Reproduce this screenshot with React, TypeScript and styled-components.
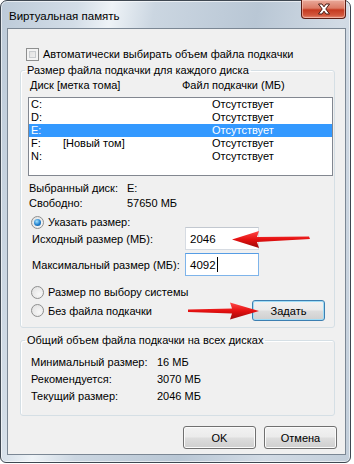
import React from "react";
import styled, { createGlobalStyle } from "styled-components";

const GlobalStyle = createGlobalStyle`
  body {
    margin: 0;
    background: #ffffff;
    font-family: "Liberation Sans", Arial, sans-serif;
    font-size: 11px;
    color: #000;
  }
`;

const Window = styled.div`
  position: relative;
  width: 351px;
  height: 463px;
  box-sizing: border-box;
  padding: 0 4px 7px 6px;
  display: flex;
  flex-direction: column;
  border: 1px solid #3f4852;
  border-radius: 7px 7px 6px 6px;
  background: linear-gradient(
    100deg,
    #bccad8 0%,
    #d3dde7 18%,
    #eef3f7 26%,
    #cbd6e1 36%,
    #b9c7d5 60%,
    #d2dbe5 80%,
    #c2ceda 100%
  );
  box-shadow: inset 0 0 0 1px rgba(255, 255, 255, 0.6);
`;

const TitleBar = styled.div`
  height: 27px;
  display: flex;
  align-items: flex-start;
  justify-content: space-between;
`;

const Title = styled.span`
  margin: 8px 0 0 2px;
  line-height: 14px;
  font-size: 11.5px;
  color: #000;
`;

const CloseButton = styled.div`
  width: 45px;
  height: 19px;
  margin-top: -1px;
  display: flex;
  align-items: center;
  justify-content: center;
  box-sizing: border-box;
  border: 1px solid #5b1d14;
  border-top: none;
  border-radius: 0 0 4px 4px;
  background: linear-gradient(
    180deg,
    #e9a99a 0%,
    #dc7c66 45%,
    #c53a20 55%,
    #d2583d 85%,
    #e6907a 100%
  );
  box-shadow: inset 0 0 0 1px rgba(255, 220, 210, 0.5);
`;

const Client = styled.div`
  flex: 1;
  display: flex;
  flex-direction: column;
  padding: 0 10px 0 12px;
  background: #f0f0f0;
  border: 1px solid #7b8794;
`;

const CheckRow = styled.label`
  display: flex;
  align-items: center;
  gap: 4px;
  margin: 19px 0 0 6px;
  height: 13px;
  line-height: 13px;
`;

const CheckBox = styled.span`
  width: 13px;
  height: 13px;
  box-sizing: border-box;
  border: 1px solid #8e8f8f;
  background: linear-gradient(135deg, #dcdcdc 0%, #f6f6f6 100%);
  box-shadow: inset 0 0 0 2px #f4f4f4, inset 0 0 0 3px #c9cccf;
`;

const Group = styled.fieldset<{ $bottom: number; $top: number }>`
  margin: ${(p) => p.$top}px 0 0 0;
  padding: 0 0 ${(p) => p.$bottom}px 0;
  border: 1px solid #d5dfe5;
  border-radius: 3px;
  box-shadow: inset 1px 1px 0 #fff;
  min-width: 0;
`;

const Legend = styled.legend`
  margin-left: 4px;
  padding: 0 2px;
  line-height: 14px;
`;

const ColumnHead = styled.div`
  display: grid;
  grid-template-columns: 152px 1fr;
  padding-left: 9px;
  margin-top: 1px;
  line-height: 14px;
`;

const ListBox = styled.div`
  margin: 5px 1px 0 7px;
  height: 79px;
  box-sizing: border-box;
  border: 1px solid #828790;
  background: #fff;
`;

const ListRow = styled.div<{ $selected?: boolean }>`
  display: grid;
  grid-template-columns: 32px 149px 1fr;
  height: 13px;
  line-height: 13px;
  padding-left: 2px;
  background: ${(p) => (p.$selected ? "#3399ff" : "transparent")};
  color: ${(p) => (p.$selected ? "#fff" : "#000")};
`;

const InfoRow = styled.div<{ $label: number; $line?: number; $pad?: number }>`
  display: grid;
  grid-template-columns: ${(p) => p.$label}px 1fr;
  line-height: ${(p) => p.$line ?? 15}px;
  padding-left: ${(p) => p.$pad ?? 8}px;
  white-space: nowrap;
`;

const InfoBlock = styled.div<{ $top: number }>`
  margin-top: ${(p) => p.$top}px;
`;

const RadioRow = styled.label<{ $top: number; $height?: number }>`
  display: flex;
  align-items: center;
  gap: 4px;
  padding-left: 10px;
  margin-top: ${(p) => p.$top}px;
  height: ${(p) => p.$height ?? 14}px;
`;

const RadioLabel = styled.span`
  display: flex;
  align-items: center;
  gap: 4px;
`;

const Radio = styled.span<{ $checked?: boolean }>`
  width: 13px;
  height: 13px;
  box-sizing: border-box;
  border-radius: 50%;
  border: 1px solid #8e8f8f;
  background: radial-gradient(circle at 65% 65%, #f8f8f8 0%, #dedede 100%);
  display: flex;
  align-items: center;
  justify-content: center;

  &::after {
    content: "";
    display: ${(p) => (p.$checked ? "block" : "none")};
    width: 7px;
    height: 7px;
    border-radius: 50%;
    background: radial-gradient(circle at 40% 35%, #a6e4ff 0%, #1f7fce 55%, #0f4f8a 100%);
  }
`;

const FieldRow = styled.div<{ $top: number }>`
  display: flex;
  align-items: center;
  margin-top: ${(p) => p.$top}px;
  padding-left: 11px;
`;

const FieldLabel = styled.span`
  width: 153px;
  white-space: nowrap;
`;

const TextBox = styled.div<{ $focused?: boolean }>`
  width: 74px;
  height: 23px;
  box-sizing: border-box;
  border: 1px solid ${(p) => (p.$focused ? "#7eb4ea" : "#d6dbe2")};
  border-top-color: ${(p) => (p.$focused ? "#569de5" : "#c2c8d0")};
  background: #fff;
  display: flex;
  align-items: center;
  padding-left: 4px;
  font-size: 11.5px;
`;

const Caret = styled.span`
  width: 1px;
  height: 15px;
  background: #000;
  margin-left: 1px;
`;

const Button = styled.button<{ $focused?: boolean; $h?: number }>`
  width: 73px;
  height: ${(p) => p.$h ?? 23}px;
  box-sizing: border-box;
  padding: 0;
  font-family: "Liberation Sans", Arial, sans-serif;
  font-size: 11px;
  color: #000;
  border-radius: 3px;
  border: 1px solid ${(p) => (p.$focused ? "#3c7fb1" : "#707070")};
  background: linear-gradient(
    180deg,
    #f2f2f2 0%,
    #ebebeb 48%,
    #dddddd 52%,
    #cfcfcf 100%
  );
  box-shadow: inset 0 0 0 1px ${(p) => (p.$focused ? "#9fdcf6" : "#fbfbfb")};
`;

const SplitRow = styled.div`
  display: flex;
  align-items: center;
  justify-content: space-between;
  margin-top: 1px;
  padding: 0 9px 0 10px;
  height: 21px;
`;

const Footer = styled.div`
  display: flex;
  justify-content: flex-end;
  gap: 8px;
  margin: 10px -2px 0 0;
`;

const Overlay = styled.svg`
  position: absolute;
  left: -1px;
  top: -1px;
  pointer-events: none;
`;

const drives = [
  { d: "C:", label: "", size: "Отсутствует" },
  { d: "D:", label: "", size: "Отсутствует" },
  { d: "E:", label: "", size: "Отсутствует", sel: true },
  { d: "F:", label: "[Новый том]", size: "Отсутствует" },
  { d: "N:", label: "", size: "Отсутствует" },
];

const totals = [
  ["Минимальный размер:", "16 МБ"],
  ["Рекомендуется:", "3070 МБ"],
  ["Текущий размер:", "2046 МБ"],
];

const App = () => {
  return (
    <>
      <GlobalStyle />
      <Window>
        <TitleBar>
          <Title>Виртуальная память</Title>
          <CloseButton>
            <svg width="14" height="12" viewBox="0 0 14 12">
              <path
                d="M1.5 1 H5 L7 3.8 L9 1 H12.5 L8.8 6 L12.5 11 H9 L7 8.2 L5 11 H1.5 L5.2 6 Z"
                fill="#fff"
                stroke="#4a1a12"
                strokeWidth="1"
                strokeLinejoin="round"
              />
            </svg>
          </CloseButton>
        </TitleBar>
        <Client>
          <CheckRow>
            <CheckBox />
            <span>Автоматически выбирать объем файла подкачки</span>
          </CheckRow>

          <Group $top={2} $bottom={6}>
            <Legend>Размер файла подкачки для каждого диска</Legend>
            <ColumnHead>
              <span>Диск [метка тома]</span>
              <span>Файл подкачки (МБ)</span>
            </ColumnHead>
            <ListBox>
              {drives.map((r) => (
                <ListRow key={r.d} $selected={r.sel}>
                  <span>{r.d}</span>
                  <span>{r.label}</span>
                  <span>{r.size}</span>
                </ListRow>
              ))}
            </ListBox>
            <InfoBlock $top={5}>
              <InfoRow $label={98}>
                <span>Выбранный диск:</span>
                <span>E:</span>
              </InfoRow>
              <InfoRow $label={98}>
                <span>Свободно:</span>
                <span>57650 МБ</span>
              </InfoRow>
            </InfoBlock>
            <RadioRow $top={5} $height={12}>
              <Radio $checked />
              <span>Указать размер:</span>
            </RadioRow>
            <FieldRow $top={-1}>
              <FieldLabel>Исходный размер (МБ):</FieldLabel>
              <TextBox>2046</TextBox>
            </FieldRow>
            <FieldRow $top={3}>
              <FieldLabel>Максимальный размер (МБ):</FieldLabel>
              <TextBox $focused>
                4092
                <Caret />
              </TextBox>
            </FieldRow>
            <RadioRow $top={9}>
              <Radio />
              <span>Размер по выбору системы</span>
            </RadioRow>
            <SplitRow>
              <RadioLabel>
                <Radio />
                <span>Без файла подкачки</span>
              </RadioLabel>
              <Button $focused $h={21}>
                Задать
              </Button>
            </SplitRow>
          </Group>

          <Group $top={5} $bottom={10}>
            <Legend>Общий объем файла подкачки на всех дисках</Legend>
            <InfoBlock $top={7}>
              {totals.map(([k, v]) => (
                <InfoRow key={k} $label={126} $line={17} $pad={10}>
                  <span>{k}</span>
                  <span>{v}</span>
                </InfoRow>
              ))}
            </InfoBlock>
          </Group>

          <Footer>
            <Button>OK</Button>
            <Button>Отмена</Button>
          </Footer>
        </Client>

        <Overlay width="354" height="464" viewBox="0 0 354 464">
          <defs>
            <linearGradient id="arr" x1="0" y1="0" x2="0" y2="1">
              <stop offset="0" stopColor="#ff4a4a" />
              <stop offset="0.5" stopColor="#e41010" />
              <stop offset="1" stopColor="#9c0a0a" />
            </linearGradient>
          </defs>
          <path
            d="M232 239.5 L259 231 L257 237 L309 236.5 L310 239 L257 242 L259 248 Z"
            fill="url(#arr)"
          />
          <path
            d="M259 311 L230 302.5 L232 308.5 L188 309.5 L188 312 L232 313.5 L230 319.5 Z"
            fill="url(#arr)"
          />
        </Overlay>
      </Window>
    </>
  );
};

export default App;
